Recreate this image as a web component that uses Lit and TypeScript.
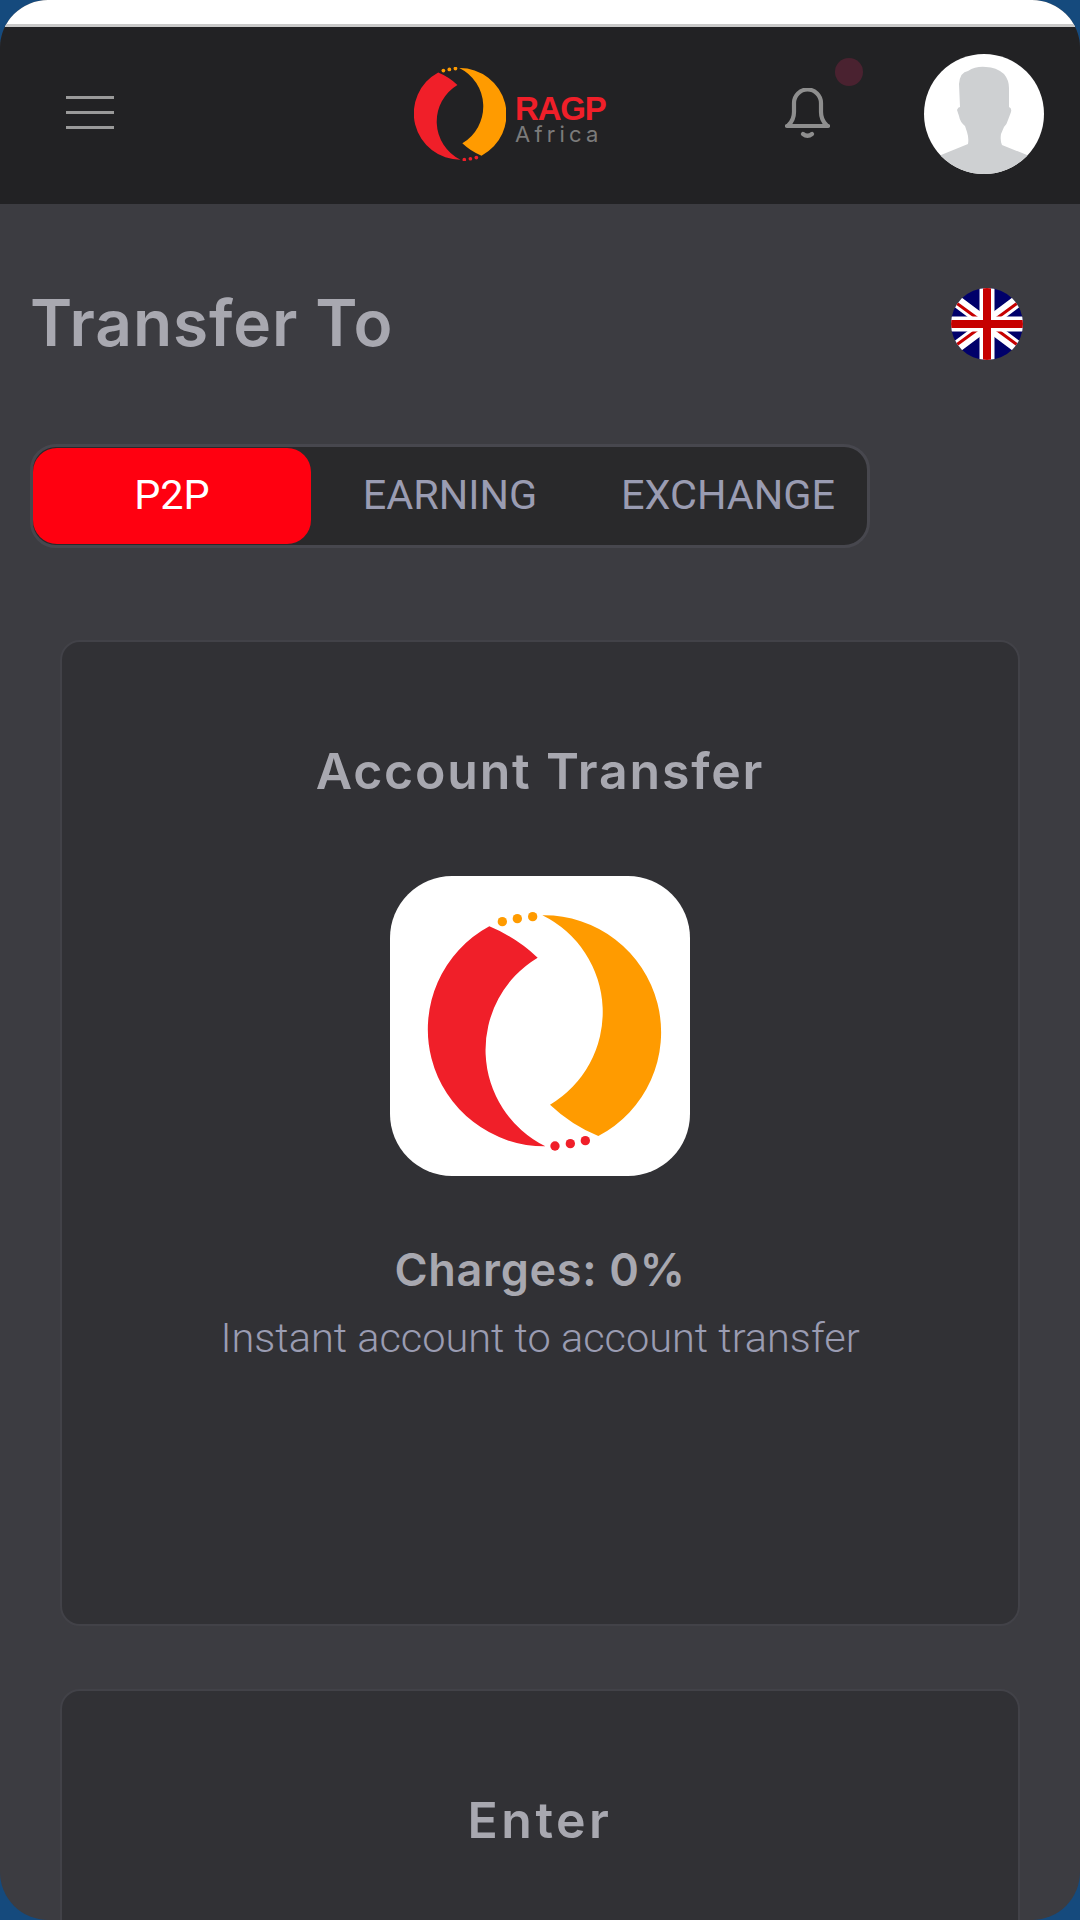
import { LitElement, css, html, svg } from "lit";
import { customElement, property } from "lit/decorators.js";

const TABS = ["P2P", "EARNING", "EXCHANGE"];

// both crescents and the dots, drawn on a 900 unit tile
const logoMark = svg`
  <path fill="#f01f29" d="M298 151A351 351 0 0 0 466 811A323 323 0 0 1 443 245Q380 185 298 151Z" />
  <path fill="#ff9b00" d="M625 780A351 351 0 0 0 457 118A323 323 0 0 1 480 686Q543 746 625 780Z" />
  <g fill="#ff9b00">
    <circle cx="337" cy="137" r="14" />
    <circle cx="382" cy="128" r="14" />
    <circle cx="428" cy="122" r="14" />
  </g>
  <g fill="#f01f29">
    <circle cx="495" cy="810" r="14" />
    <circle cx="541" cy="803" r="14" />
    <circle cx="586" cy="794" r="14" />
  </g>
`;

@customElement("app-card")
export class AppCard extends LitElement {
  @property() public heading = "";

  protected render() {
    return html`
      <section class="card">
        <h2>${this.heading}</h2>
        <slot></slot>
      </section>
    `;
  }

  static styles = css`
    :host {
      display: block;
    }

    .card {
      box-sizing: border-box;
      min-height: 986px;
      padding-top: 99px;
      background: #313135;
      border: 2px solid #424248;
      border-radius: 20px;
      text-align: center;
    }

    h2 {
      margin: 0;
      font: 600 50px/60px "Inter", sans-serif;
      letter-spacing: var(--heading-spacing, 1.8px);
      color: #a8a8b0;
    }
  `;
}

@customElement("app-root")
export class AppRoot extends LitElement {
  @property({ type: Number }) public activeTab = 0;

  private renderHeader() {
    return html`
      <header class="topbar">
        <div class="menu"><span></span><span></span><span></span></div>
        <div class="brand">
          <svg class="brand-mark" viewBox="115 110 695 710">${logoMark}</svg>
          <div class="brand-text">
            <div class="brand-name">RAGP</div>
            <div class="brand-sub">Africa</div>
          </div>
        </div>
        <div class="actions">
          <div class="bell">
            <svg viewBox="0 0 45 51" width="45" height="51" fill="none" stroke="#8e8e8e" stroke-width="4.2" stroke-linecap="round">
              <path d="M2 38H43" />
              <path d="M3.5 37Q9 32 9 24V15A13.5 13.5 0 0 1 36 15V24Q36 32 41.5 37" />
              <path d="M18 46Q22.5 49.5 27 46" />
            </svg>
            <span class="dot"></span>
          </div>
          <svg class="avatar" viewBox="0 0 120 120">
            <path fill="#ced0d2" d="M17 101L44 90Q45 84 43 78L41 72Q36 68 35 62L33 56Q34 53 36 53L35 30Q36 18 44 17Q52 12 62 13Q72 13 80 20Q85 26 85 34L85 53Q88 54 87 58L84 66Q83 70 80 73L77 80Q76 87 78 91L103 101L120 120L0 120Z" />
          </svg>
        </div>
      </header>
    `;
  }

  private renderFlag() {
    return html`
      <svg class="flag" viewBox="0 0 72 72">
        <rect width="72" height="72" fill="#00006a" />
        <path d="M4 12L68 60M68 12L4 60" stroke="#fff" stroke-width="12" />
        <path d="M4 14L30 33M42 39L68 58M4 58L30 39M42 33L68 14" stroke="#c60000" stroke-width="3" />
        <path d="M36 0V72M0 36H72" stroke="#fff" stroke-width="15" />
        <path d="M36 0V72M0 36H72" stroke="#c60000" stroke-width="8" />
      </svg>
    `;
  }

  protected render() {
    return html`
      <div class="screen">
        <div class="statusbar"></div>
        ${this.renderHeader()}
        <main>
          <div class="title-row">
            <h1>Transfer To</h1>
            ${this.renderFlag()}
          </div>
          <nav class="tabs">
            ${TABS.map(
              (tab, i) => html`<div class="tab ${i === this.activeTab ? "active" : ""}">${tab}</div>`
            )}
          </nav>
          <div class="cards">
            <app-card heading="Account Transfer">
              <svg class="logo-tile" viewBox="0 0 900 900">${logoMark}</svg>
              <div class="charges">Charges: 0%</div>
              <div class="desc">Instant account to account transfer</div>
            </app-card>
            <app-card class="enter" heading="Enter"></app-card>
          </div>
        </main>
      </div>
    `;
  }

  static styles = css`
    :host {
      display: block;
      height: 1920px;
      overflow: hidden;
      background: #154a7d;
      font-family: "Roboto", sans-serif;
    }

    .screen {
      height: 1920px;
      overflow: hidden;
      border-radius: 48px;
      background: #3c3c41;
    }

    .statusbar {
      height: 24px;
      background: #fff;
      border-bottom: 3px solid #c9c9c9;
    }

    .topbar {
      display: flex;
      align-items: center;
      height: 177px;
      padding-right: 36px;
      background: #222224;
    }

    .menu {
      display: grid;
      gap: 12px;
      width: 48px;
      margin: -7px 0 0 66px;
    }

    .menu span {
      height: 3px;
      background: #9a9a9a;
    }

    .brand {
      display: flex;
      align-items: center;
      gap: 9px;
      margin: -4px 0 0 300px;
    }

    .brand-mark {
      display: block;
      width: 92px;
      height: 94px;
    }

    .brand-text {
      margin-top: 10px;
    }

    .brand-name {
      font: 700 33px/30px "Liberation Sans", sans-serif;
      letter-spacing: -1.2px;
      color: #f01f29;
    }

    .brand-sub {
      font: 400 22px/20px "Inter", sans-serif;
      letter-spacing: 4.2px;
      color: #7b7b7b;
    }

    .actions {
      display: flex;
      align-items: center;
      gap: 94px;
      margin-left: auto;
    }

    .bell {
      position: relative;
      width: 45px;
      height: 51px;
      margin-bottom: 4px;
    }

    .bell svg {
      display: block;
    }

    .dot {
      position: absolute;
      left: 50px;
      top: -30px;
      width: 28px;
      height: 28px;
      border-radius: 50%;
      background: #4a2230;
    }

    .avatar {
      width: 120px;
      height: 120px;
      margin-top: -4px;
      border-radius: 50%;
      background: #fff;
    }

    main {
      padding: 83px 60px 0 30px;
    }

    .title-row {
      display: flex;
      align-items: center;
      justify-content: space-between;
      height: 72px;
    }

    h1 {
      margin: 0;
      font: 600 64px/72px "Inter", sans-serif;
      letter-spacing: 0.9px;
      color: #a8a8b0;
    }

    .flag {
      width: 72px;
      height: 72px;
      margin: 1px -3px 0 0;
      border-radius: 50%;
    }

    .tabs {
      display: flex;
      box-sizing: border-box;
      width: 840px;
      height: 104px;
      margin-top: 85px;
      padding: 1px 0;
      background: #29292b;
      border: 3px solid #47474e;
      border-radius: 26px;
    }

    .tab {
      flex: 0 0 278px;
      height: 96px;
      font-size: 41.4px;
      line-height: 94px;
      text-align: center;
      color: #9a9cb2;
    }

    .tab.active {
      background: #ff0010;
      color: #fff;
      border-radius: 24px;
    }

    .cards {
      display: grid;
      gap: 63px;
      margin: 92px 0 0 30px;
    }

    .enter {
      --heading-spacing: 3.5px;
    }

    .logo-tile {
      display: block;
      width: 300px;
      height: 300px;
      margin: 75px auto 0;
      background: #fff;
      border-radius: 62px;
    }

    .charges {
      margin-top: 67px;
      font: 600 45px/54px "Inter", sans-serif;
      letter-spacing: 0.7px;
      color: #a8a8b0;
    }

    .desc {
      margin-top: 16px;
      font: 300 41.5px/50px "Roboto", sans-serif;
      color: #9a9cb2;
    }
  `;
}
